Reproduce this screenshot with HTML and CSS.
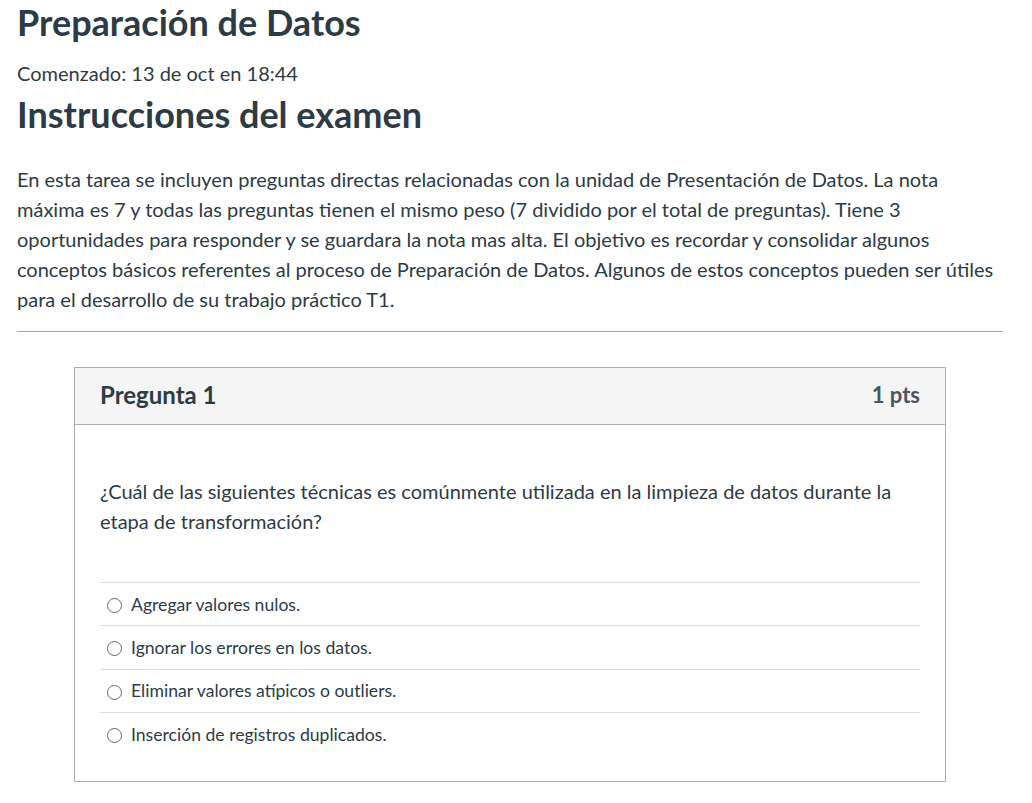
FILE: index.html
```html
<!DOCTYPE html>
<html lang="es">
<head>
<meta charset="utf-8">
<title>Preparación de Datos</title>
<link rel="stylesheet" href="styles.css">
</head>
<body>
<main class="page">
  <h1 class="title">Preparación de Datos</h1>
  <p class="started">Comenzado: 13 de oct en 18:44</p>
  <h2 class="subtitle">Instrucciones del examen</h2>
  <p class="intro">En esta tarea se incluyen preguntas directas relacionadas con la unidad de Presentación de Datos. La nota máxima es 7 y todas las preguntas tienen el mismo peso (7 dividido por el total de preguntas). Tiene 3 oportunidades para responder y se guardara la nota mas alta. El objetivo es recordar y consolidar algunos conceptos básicos referentes al proceso de Preparación de Datos. Algunos de estos conceptos pueden ser útiles para el desarrollo de su trabajo práctico T1.</p>
  <hr class="divider">
  <section class="question">
    <header class="q-header">
      <span class="q-name">Pregunta 1</span>
      <span class="q-points">1 pts</span>
    </header>
    <div class="q-body">
      <p class="q-text">¿Cuál de las siguientes técnicas es comúnmente utilizada en la limpieza de datos durante la etapa de transformación?</p>
      <ul class="answers">
        <li class="answer"><span class="radio"></span>Agregar valores nulos.</li>
        <li class="answer"><span class="radio"></span>Ignorar los errores en los datos.</li>
        <li class="answer"><span class="radio"></span>Eliminar valores atípicos o outliers.</li>
        <li class="answer"><span class="radio"></span>Inserción de registros duplicados.</li>
      </ul>
    </div>
  </section>
</main>
</body>
</html>
```
FILE: styles.css
```css
html, body {
  margin: 0;
  padding: 0;
  background: #ffffff;
}
body {
  font-family: Lato, "Noto Sans", sans-serif;
  color: #2d3b45;
}
.page {
  padding: 0 29px 0 17px;
}
.title {
  margin: 0;
  font-size: 36px;
  font-weight: 700;
  line-height: 44px;
}
.started {
  margin: 14px 0 0;
  font-size: 20px;
  line-height: 30px;
}
.subtitle {
  margin: 4px 0 0;
  font-size: 36px;
  font-weight: 700;
  line-height: 44px;
}
.intro {
  margin: 28px 0 0;
  font-size: 20px;
  line-height: 30px;
}
.divider {
  margin: 17px 0 0;
  border: 0;
  border-top: 1px solid #a5a5a5;
  height: 0;
}
.question {
  margin: 35px 57px 0;
  border: 1px solid #adadad;
}
.q-header {
  display: flex;
  justify-content: space-between;
  align-items: center;
  height: 52px;
  padding: 0 25px 4px;
  background: #f5f5f5;
  border-bottom: 1px solid #adadad;
  font-size: 24px;
  font-weight: 700;
}
.q-points {
  color: #4a5660;
  font-size: 22px;
}
.q-body {
  padding: 51px 25px 26px;
}
.q-text {
  margin: 0;
  font-size: 20px;
  line-height: 30px;
}
.answers {
  list-style: none;
  margin: 46px 0 0;
  padding: 0;
}
.answer {
  display: flex;
  align-items: center;
  height: 42.3px;
  padding-left: 7px;
  border-top: 1px solid #dcdcdc;
  font-size: 17.6px;
}
.radio {
  width: 13px;
  height: 13px;
  border: 1px solid #6a6a6a;
  border-radius: 50%;
  margin: 3px 9px 0 0;
  flex: none;
}
```
